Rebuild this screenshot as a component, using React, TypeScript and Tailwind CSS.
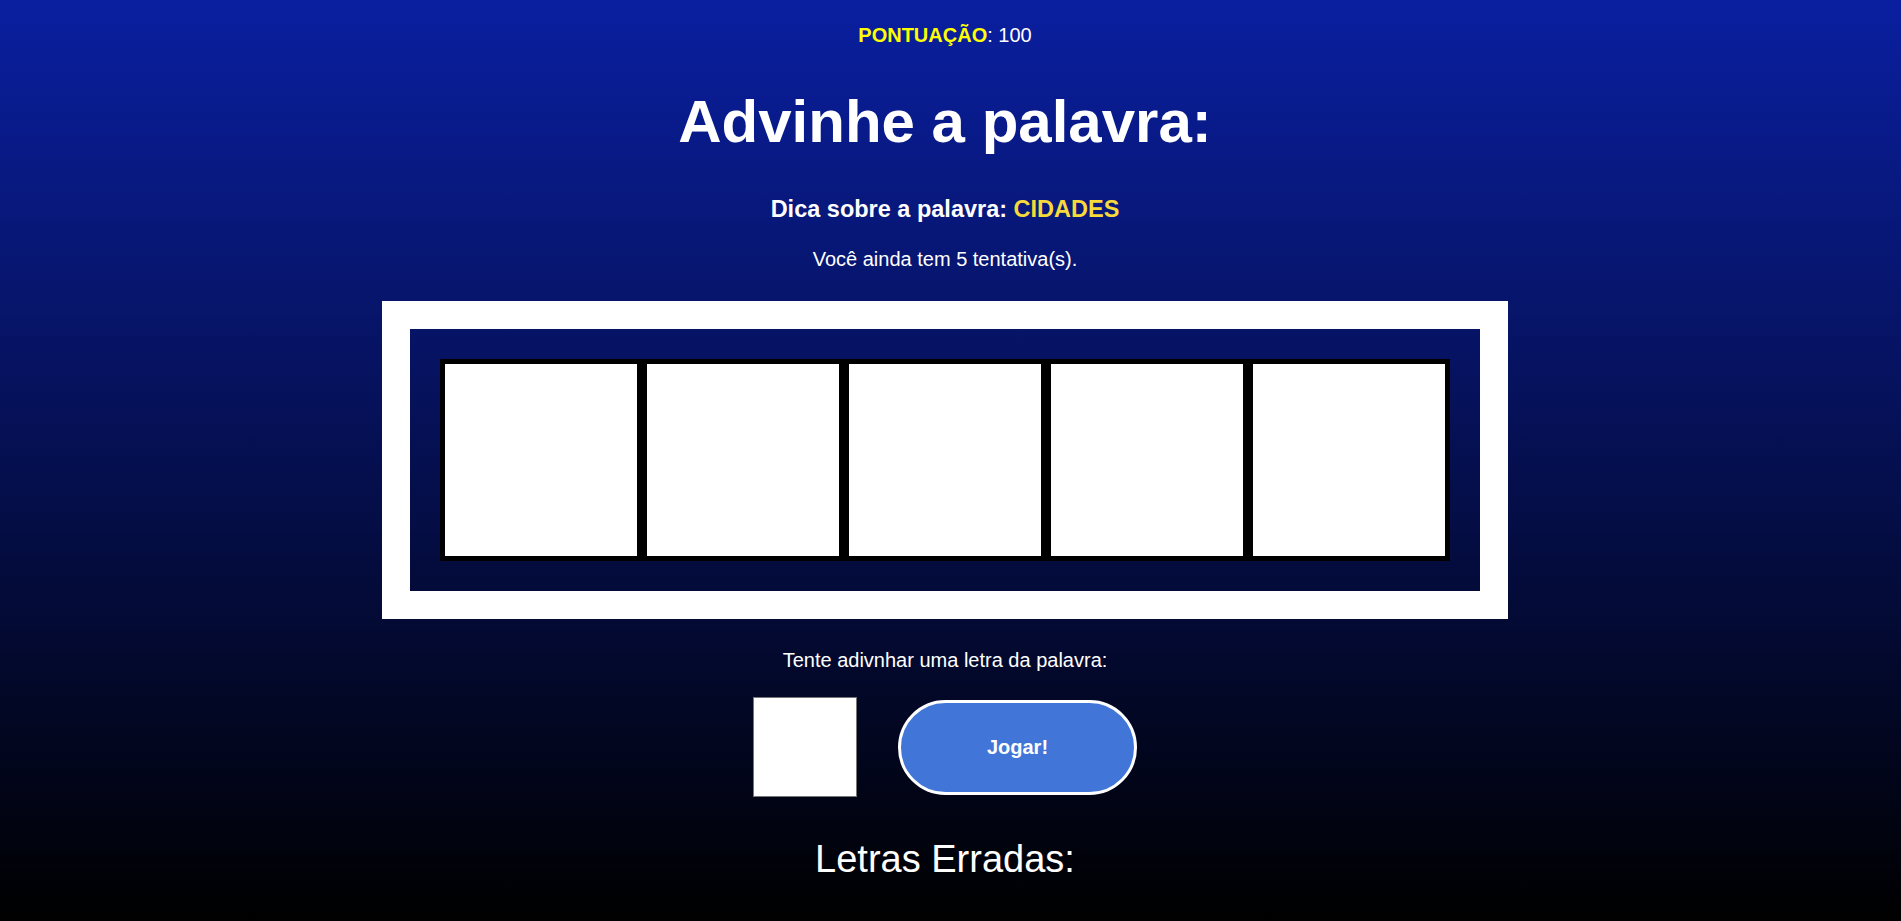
import React from "react";

export default function App() {
  const tiles = [0, 1, 2, 3, 4];
  return (
    <div
      className="min-h-[921px] w-full bg-[linear-gradient(to_bottom,#0a1fa0,#000000)] text-white"
      style={{ fontFamily: '"Liberation Sans", Arial, sans-serif' }}
    >
      <div className="flex flex-col items-center pr-[11px] pt-[25px]">
        <p className="text-[20px] leading-[20px]">
          <span className="font-bold text-[#ffff00]">PONTUAÇÃO</span>: 100
        </p>
        <h1 className="mt-[47px] text-[60px] font-bold leading-[60px]">Advinhe a palavra:</h1>
        <h3 className="mt-[46px] text-[23.5px] font-bold leading-[23.5px]">
          Dica sobre a palavra: <span className="text-[#f7d93b]">CIDADES</span>
        </h3>
        <p className="mt-[27.5px] text-[20px] leading-[20px]">Você ainda tem 5 tentativa(s).</p>
        <div className="mt-[32px] border-[28px] border-white p-[30px]">
          <div className="flex">
            {tiles.map((t) => (
              <div key={t} className="h-[202px] w-[202px] border-[5px] border-black bg-white" />
            ))}
          </div>
        </div>
        <p className="mt-[31px] text-[20px] leading-[20px]">Tente adivnhar uma letra da palavra:</p>
        <div className="mt-[27px] flex items-center gap-[41px]">
          <div className="h-[100px] w-[104px] border border-[#767676] bg-white" />
          <button className="h-[95px] w-[239px] rounded-full border-[3px] border-white bg-[#4176d8] text-[20px] font-bold text-white">
            Jogar!
          </button>
        </div>
        <h2 className="mt-[43px] text-[38px] leading-[38px]">Letras Erradas:</h2>
      </div>
    </div>
  );
}
